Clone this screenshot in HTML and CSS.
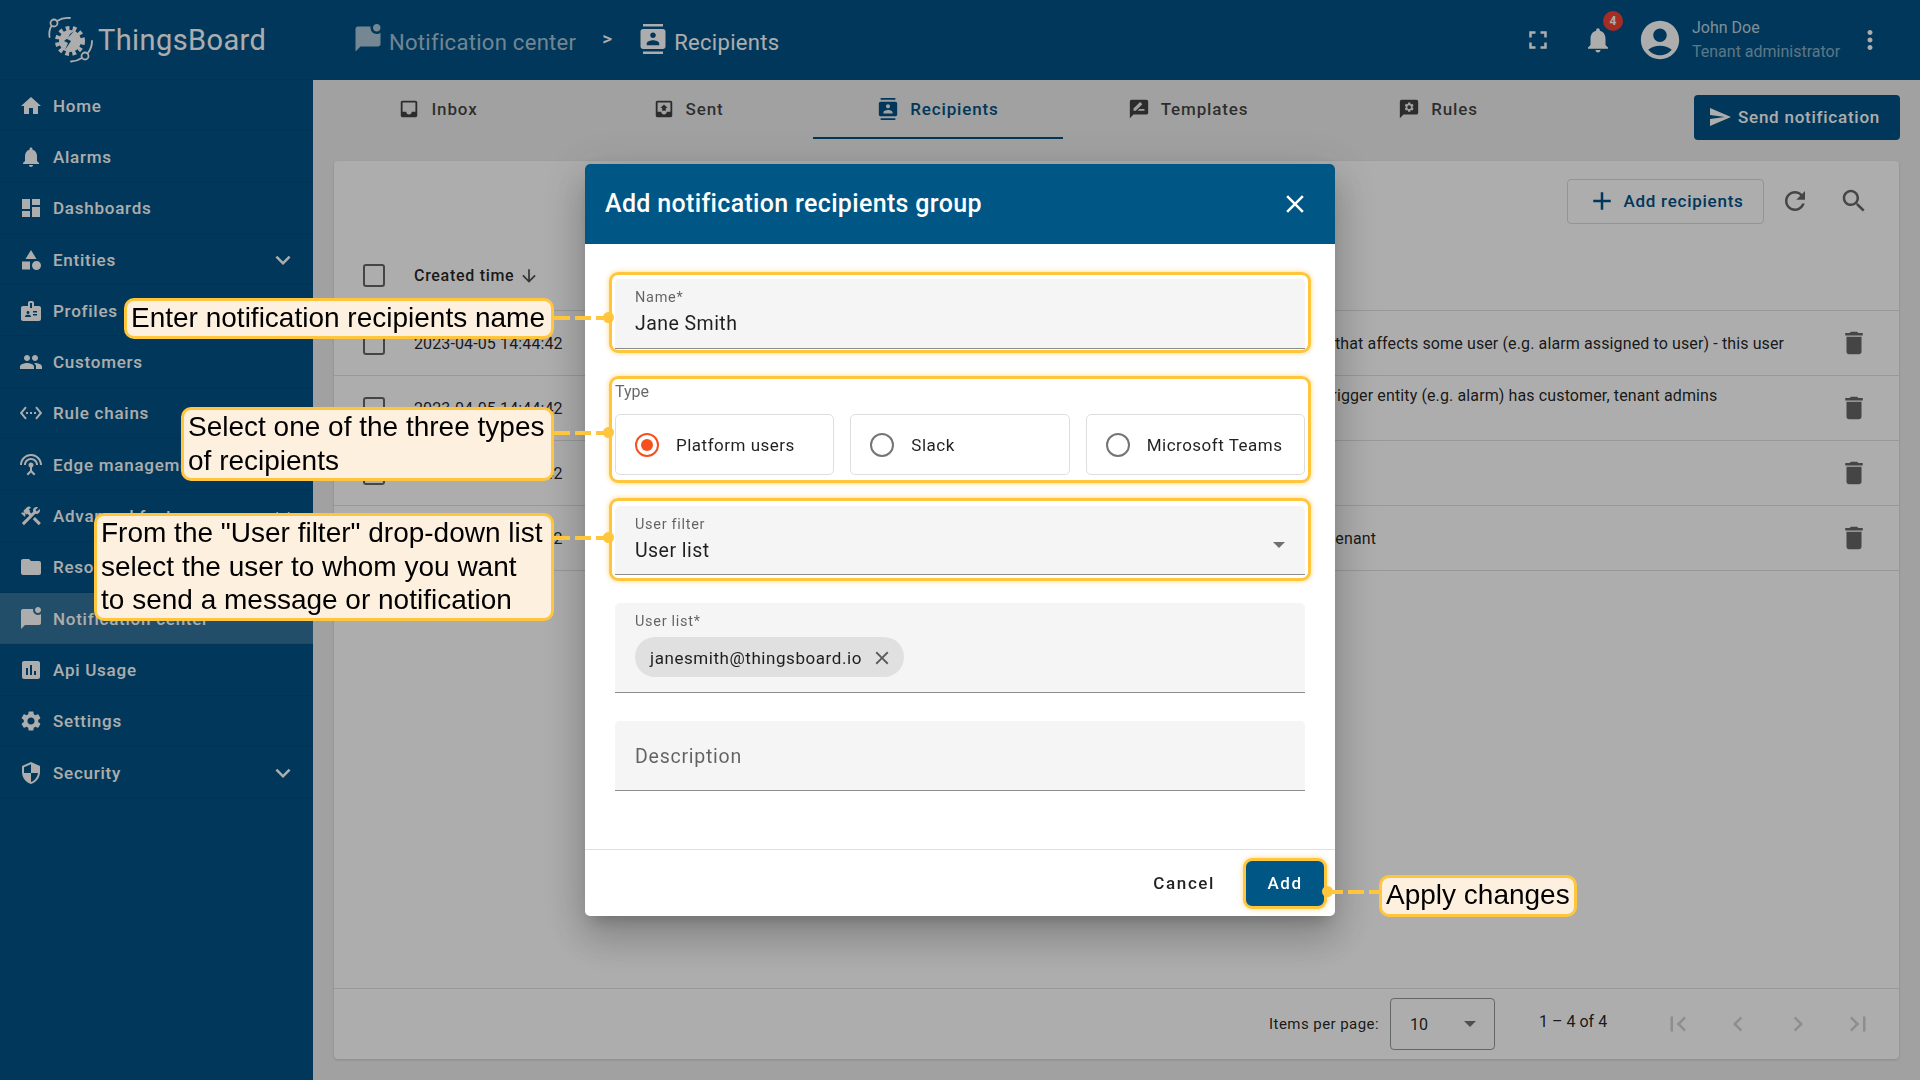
FILE: index.html
```html
<!DOCTYPE html>
<html>
<head>
    <meta charset="utf-8">
    <title>Notification center - Recipients</title>
    <link rel="stylesheet" href="styles.css">
</head>
<body>
<svg class="defs" width="0" height="0">
    <symbol id="i-home" viewBox="0 0 24 24"><path d="M10 20v-6h4v6h5v-8h3L12 3 2 12h3v8z"/></symbol>
    <symbol id="i-bell" viewBox="0 0 24 24"><path d="M12 22c1.1 0 2-.9 2-2h-4c0 1.1.89 2 2 2zm6-6v-5c0-3.07-1.64-5.64-4.5-6.32V4c0-.83-.67-1.5-1.5-1.5s-1.5.67-1.5 1.5v.68C7.63 5.36 6 7.92 6 11v5l-2 2v1h16v-1l-2-2z"/></symbol>
    <symbol id="i-dash" viewBox="0 0 24 24"><path d="M3 13h8V3H3v10zm0 8h8v-6H3v6zm10 0h8V11h-8v10zm0-18v6h8V3h-8z"/></symbol>
    <symbol id="i-entities" viewBox="0 0 24 24"><path d="M12 2l-5.5 9h11zM3 13.5h8v8H3zM17.5 13a4.5 4.5 0 1 0 0 9 4.5 4.5 0 0 0 0-9z"/></symbol>
    <symbol id="i-badge" viewBox="0 0 24 24"><path d="M20 7h-5V4c0-1.1-.9-2-2-2h-2c-1.1 0-2 .9-2 2v3H4c-1.1 0-2 .9-2 2v11c0 1.1.9 2 2 2h16c1.1 0 2-.9 2-2V9c0-1.1-.9-2-2-2zM9 12c.83 0 1.5.67 1.5 1.5S9.83 15 9 15s-1.5-.67-1.5-1.5S8.17 12 9 12zm3 6H6v-.43c0-.6.36-1.15.92-1.39.64-.28 1.34-.43 2.08-.43s1.44.15 2.08.43c.55.24.92.78.92 1.39V18zm1-9h-2V4h2v5zm5 7.5h-4V15h4v1.5zm0-3h-4V12h4v1.5z"/></symbol>
    <symbol id="i-people" viewBox="0 0 24 24"><path d="M16 11c1.66 0 2.99-1.34 2.99-3S17.66 5 16 5s-3 1.34-3 3 1.34 3 3 3zm-8 0c1.66 0 2.99-1.34 2.99-3S9.66 5 8 5 5 6.34 5 8s1.34 3 3 3zm0 2c-2.33 0-7 1.17-7 3.5V19h14v-2.5C15 14.17 10.33 13 8 13zm8 0c-.29 0-.62.02-.97.05 1.16.84 1.97 1.97 1.97 3.45V19h6v-2.5c0-2.33-4.67-3.5-7-3.5z"/></symbol>
    <symbol id="i-rules" viewBox="0 0 24 24"><path d="M7.77 6.76L6.23 5.48.82 12l5.41 6.52 1.54-1.28L3.42 12l4.35-5.24zM7 13h2v-2H7v2zm10-2h-2v2h2v-2zm-6 2h2v-2h-2v2zm6.77-7.52l-1.54 1.28L20.58 12l-4.35 5.24 1.54 1.28L23.18 12l-5.41-6.52z"/></symbol>
    <symbol id="i-edge" viewBox="0 0 24 24"><path d="M12 5c-3.87 0-7 3.13-7 7h2c0-2.76 2.24-5 5-5s5 2.24 5 5h2c0-3.87-3.13-7-7-7zm1 9.29c.88-.39 1.5-1.26 1.5-2.29 0-1.38-1.12-2.5-2.5-2.5S9.5 10.62 9.5 12c0 1.02.62 1.9 1.5 2.29v3.3L7.59 21 9 22.41l3-3 3 3L16.41 21 13 17.59v-3.3zM12 1C5.93 1 1 5.93 1 12h2c0-4.97 4.03-9 9-9s9 4.03 9 9h2c0-6.07-4.93-11-11-11z"/></symbol>
    <symbol id="i-tools" viewBox="0 0 24 24"><path d="M13.783 15.172l2.121-2.121 5.996 5.996-2.121 2.121zM17.5 10c1.93 0 3.5-1.57 3.5-3.5 0-.58-.16-1.12-.41-1.6l-2.7 2.7-1.49-1.49 2.7-2.7c-.48-.25-1.02-.41-1.6-.41C15.57 3 14 4.57 14 6.5c0 .41.08.8.21 1.16l-1.85 1.85-1.78-1.78.71-.71-1.41-1.41L12 3.49c-1.17-1.17-3.07-1.17-4.24 0L4.22 7.03l1.41 1.41H2.81l-.71.71 3.54 3.54.71-.71V9.15l1.41 1.41.71-.71 1.78 1.78-7.41 7.41 2.12 2.12L16.34 9.79c.36.13.75.21 1.16.21z"/></symbol>
    <symbol id="i-folder" viewBox="0 0 24 24"><path d="M10 4H4c-1.1 0-1.99.9-1.99 2L2 18c0 1.1.9 2 2 2h16c1.1 0 2-.9 2-2V8c0-1.1-.9-2-2-2h-8l-2-2z"/></symbol>
    <symbol id="i-notif" viewBox="0 0 24 24"><path d="M22 6.98V16c0 1.1-.9 2-2 2H6l-4 4V4c0-1.1.9-2 2-2h10.1c-.06.32-.1.66-.1 1 0 2.76 2.24 5 5 5 1.13 0 2.16-.39 3-1.02zM16 3c0 1.66 1.34 3 3 3s3-1.34 3-3-1.34-3-3-3-3 1.34-3 3z"/></symbol>
    <symbol id="i-chart" viewBox="0 0 24 24"><path d="M19 3H5c-1.1 0-2 .9-2 2v14c0 1.1.9 2 2 2h14c1.1 0 2-.9 2-2V5c0-1.1-.9-2-2-2zM9 17H7v-7h2v7zm4 0h-2V7h2v10zm4 0h-2v-4h2v4z"/></symbol>
    <symbol id="i-gear" viewBox="0 0 24 24"><path d="M19.14 12.94c.04-.3.06-.61.06-.94 0-.32-.02-.64-.07-.94l2.03-1.58c.18-.14.23-.41.12-.61l-1.92-3.32c-.12-.22-.37-.29-.59-.22l-2.39.96c-.5-.38-1.03-.7-1.62-.94l-.36-2.54c-.04-.24-.24-.41-.48-.41h-3.84c-.24 0-.43.17-.47.41l-.36 2.54c-.59.24-1.13.57-1.62.94l-2.39-.96c-.22-.08-.47 0-.59.22L2.74 8.87c-.12.21-.08.47.12.61l2.03 1.58c-.05.3-.09.63-.09.94s.02.64.07.94l-2.03 1.58c-.18.14-.23.41-.12.61l1.92 3.32c.12.22.37.29.59.22l2.39-.96c.5.38 1.03.7 1.62.94l.36 2.54c.05.24.24.41.48.41h3.84c.24 0 .44-.17.47-.41l.36-2.54c.59-.24 1.13-.56 1.62-.94l2.39.96c.22.08.47 0 .59-.22l1.92-3.32c.12-.22.07-.47-.12-.61l-2.01-1.58zM12 15.6c-1.98 0-3.6-1.62-3.6-3.6s1.62-3.6 3.6-3.6 3.6 1.62 3.6 3.6-1.62 3.6-3.6 3.6z"/></symbol>
    <symbol id="i-shield" viewBox="0 0 24 24"><path d="M12 1L3 5v6c0 5.55 3.84 10.74 9 12 5.16-1.26 9-6.45 9-12V5l-9-4zm0 10.99h7c-.53 4.12-3.28 7.79-7 8.94V12H5V6.3l7-3.11v8.8z"/></symbol>
    <symbol id="i-more" viewBox="0 0 24 24"><path d="M16.59 8.59L12 13.17 7.41 8.59 6 10l6 6 6-6z"/></symbol>
    <symbol id="i-contacts" viewBox="0 0 24 24"><path d="M20 0H4v2h16V0zM4 24h16v-2H4v2zM20 4H4c-1.1 0-2 .9-2 2v12c0 1.1.9 2 2 2h16c1.1 0 2-.9 2-2V6c0-1.1-.9-2-2-2zm-8 2.75c1.24 0 2.25 1.01 2.25 2.25s-1.01 2.25-2.25 2.25S9.75 10.24 9.75 9 10.76 6.75 12 6.75zM17 17H7v-1.5c0-1.67 3.33-2.5 5-2.5s5 .83 5 2.5V17z"/></symbol>
    <symbol id="i-inbox" viewBox="0 0 24 24"><path d="M19 3H5c-1.1 0-2 .9-2 2v14c0 1.1.9 2 2 2h14c1.1 0 2-.9 2-2V5c0-1.1-.9-2-2-2zm0 12h-4c0 1.66-1.35 3-3 3s-3-1.34-3-3H5V5h14v10z"/></symbol>
    <symbol id="i-outbox" viewBox="0 0 24 24"><path d="M19 3H5c-1.1 0-2 .9-2 2v14c0 1.1.9 2 2 2h14c1.1 0 2-.9 2-2V5c0-1.1-.9-2-2-2zm0 12h-4c0 1.66-1.35 3-3 3s-3-1.34-3-3H5V5h14v10zM8 11h2v3h4v-3h2l-4-4z"/></symbol>
    <symbol id="i-review" viewBox="0 0 24 24"><path d="M20 2H4c-1.1 0-1.99.9-1.99 2L2 22l4-4h14c1.1 0 2-.9 2-2V4c0-1.1-.9-2-2-2zM6 14v-2.47l6.88-6.88c.2-.2.51-.2.71 0l1.77 1.77c.2.2.2.51 0 .71L8.47 14H6zm12 0h-7.5l2-2H18v2z"/></symbol>
    <symbol id="i-chatgear" viewBox="0 0 24 24"><path fill-rule="evenodd" d="M20 2H4c-1.1 0-2 .9-2 2v18l4-4h14c1.1 0 2-.9 2-2V4c0-1.1-.9-2-2-2zM15.9 10.7l1.1.9-1.2 2.1-1.3-.5c-.3.2-.6.4-.9.5l-.2 1.3h-2.4l-.2-1.3c-.3-.1-.6-.3-.9-.5l-1.3.5L7.4 11.6l1.1-.9V9.3l-1.1-.9 1.2-2.1 1.3.5c.3-.2.6-.4.9-.5l.2-1.3h2.4l.2 1.3c.3.1.6.3.9.5l1.3-.5 1.2 2.1-1.1.9zM12.2 8a2 2 0 1 0 0 4 2 2 0 0 0 0-4z"/></symbol>
    <symbol id="i-send" viewBox="0 0 24 24"><path d="M2.01 21L23 12 2.01 3 2 10l15 2-15 2z"/></symbol>
    <symbol id="i-add" viewBox="0 0 24 24"><path d="M19 13h-6v6h-2v-6H5v-2h6V5h2v6h6v2z"/></symbol>
    <symbol id="i-refresh" viewBox="0 0 24 24"><path d="M17.65 6.35C16.2 4.9 14.21 4 12 4c-4.42 0-7.99 3.58-7.99 8s3.57 8 7.99 8c3.73 0 6.84-2.55 7.73-6h-2.08c-.82 2.33-3.04 4-5.65 4-3.31 0-6-2.69-6-6s2.69-6 6-6c1.66 0 3.14.69 4.22 1.78L13 11h7V4l-2.35 2.35z"/></symbol>
    <symbol id="i-search" viewBox="0 0 24 24"><path d="M15.5 14h-.79l-.28-.27C15.41 12.59 16 11.11 16 9.5 16 5.91 13.09 3 9.5 3S3 5.91 3 9.5 5.91 16 9.5 16c1.61 0 3.09-.59 4.23-1.57l.27.28v.79l5 4.99L20.49 19l-4.99-5zm-6 0C7.01 14 5 11.99 5 9.5S7.01 5 9.5 5 14 7.01 14 9.5 11.99 14 9.5 14z"/></symbol>
    <symbol id="i-trash" viewBox="0 0 24 24"><path d="M6 19c0 1.1.9 2 2 2h8c1.1 0 2-.9 2-2V7H6v12zM19 4h-3.5l-1-1h-5l-1 1H5v2h14V4z"/></symbol>
    <symbol id="i-down" viewBox="0 0 24 24"><path d="M20 12l-1.41-1.41L13 16.17V4h-2v12.17l-5.58-5.59L4 12l8 8 8-8z"/></symbol>
    <symbol id="i-full" viewBox="0 0 24 24"><path d="M7 14H5v5h5v-2H7v-3zm-2-4h2V7h3V5H5v5zm12 7h-3v2h5v-5h-2v3zM14 5v2h3v3h2V5h-5z"/></symbol>
    <symbol id="i-account" viewBox="0 0 24 24"><path d="M12 2C6.48 2 2 6.48 2 12s4.48 10 10 10 10-4.48 10-10S17.52 2 12 2zm0 4c1.93 0 3.5 1.57 3.5 3.5S13.93 13 12 13s-3.5-1.57-3.5-3.5S10.07 6 12 6zm0 14c-2.03 0-4.43-.82-6.14-2.88C7.55 15.8 9.68 15 12 15s4.45.8 6.14 2.12C16.43 19.18 14.03 20 12 20z"/></symbol>
    <symbol id="i-vert" viewBox="0 0 24 24"><path d="M12 8c1.1 0 2-.9 2-2s-.9-2-2-2-2 .9-2 2 .9 2 2 2zm0 2c-1.1 0-2 .9-2 2s.9 2 2 2 2-.9 2-2-.9-2-2-2zm0 6c-1.1 0-2 .9-2 2s.9 2 2 2 2-.9 2-2-.9-2-2-2z"/></symbol>
    <symbol id="i-close" viewBox="0 0 24 24"><path d="M19 6.41L17.59 5 12 10.59 6.41 5 5 6.41 10.59 12 5 17.59 6.41 19 12 13.41 17.59 19 19 17.59 13.41 12z"/></symbol>
    <symbol id="i-first" viewBox="0 0 24 24"><path d="M18.41 16.59L13.82 12l4.59-4.59L17 6l-6 6 6 6zM6 6h2v12H6z"/></symbol>
    <symbol id="i-prev" viewBox="0 0 24 24"><path d="M15.41 7.41L14 6l-6 6 6 6 1.41-1.41L10.83 12z"/></symbol>
    <symbol id="i-next" viewBox="0 0 24 24"><path d="M10 6L8.59 7.41 13.17 12l-4.58 4.59L10 18l6-6z"/></symbol>
    <symbol id="i-last" viewBox="0 0 24 24"><path d="M5.59 7.41L10.18 12l-4.59 4.59L7 18l6-6-6-6zM16 6h2v12h-2z"/></symbol>
</svg>

<div class="app">
    <aside class="side">
        <div class="logo">
            <svg class="logo-mark" viewBox="0 0 50 50">
                <circle class="logo-teeth" cx="24" cy="26" r="12.5"/>
                <circle class="logo-core" cx="24" cy="26" r="11"/>
                <path class="logo-bolt" d="M28 16l-7 8 4 2-6 9 3-7-4-2 4-3 2-4z"/>
                <circle class="logo-line" cx="8" cy="8" r="3.5"/>
                <circle class="logo-line" cx="39" cy="41" r="3.5"/>
                <path class="logo-line" d="M11 6C15 3.5 20 2.5 24 3M5.5 11C3.5 14 3 18 3.5 22M41.5 38.5C44.5 35 46 30 46 26M36 43C32 45.5 28 46.5 25 46.5"/>
            </svg>
            <span class="logo-text">ThingsBoard</span>
        </div>
        <nav>
            <a class="item"><svg class="ico"><use href="#i-home"/></svg>Home</a>
            <a class="item"><svg class="ico"><use href="#i-bell"/></svg>Alarms</a>
            <a class="item"><svg class="ico"><use href="#i-dash"/></svg>Dashboards</a>
            <a class="item"><svg class="ico"><use href="#i-entities"/></svg>Entities<svg class="chev"><use href="#i-more"/></svg></a>
            <a class="item"><svg class="ico"><use href="#i-badge"/></svg>Profiles</a>
            <a class="item"><svg class="ico"><use href="#i-people"/></svg>Customers</a>
            <a class="item"><svg class="ico"><use href="#i-rules"/></svg>Rule chains</a>
            <a class="item"><svg class="ico"><use href="#i-edge"/></svg>Edge management</a>
            <a class="item"><svg class="ico"><use href="#i-tools"/></svg>Advanced features<svg class="chev"><use href="#i-more"/></svg></a>
            <a class="item"><svg class="ico"><use href="#i-folder"/></svg>Resources</a>
            <a class="item active"><svg class="ico"><use href="#i-notif"/></svg>Notification center</a>
            <a class="item"><svg class="ico"><use href="#i-chart"/></svg>Api Usage</a>
            <a class="item"><svg class="ico"><use href="#i-gear"/></svg>Settings</a>
            <a class="item"><svg class="ico"><use href="#i-shield"/></svg>Security<svg class="chev"><use href="#i-more"/></svg></a>
        </nav>
    </aside>

    <div class="main">
        <header class="top">
            <div class="crumb dim"><svg class="crumb-ico"><use href="#i-notif"/></svg>Notification center</div>
            <span class="crumb-sep">&gt;</span>
            <div class="crumb"><svg class="crumb-ico"><use href="#i-contacts"/></svg>Recipients</div>
            <div class="top-right">
                <svg class="top-ico"><use href="#i-full"/></svg>
                <div class="bell"><svg class="top-ico"><use href="#i-bell"/></svg><span class="badge">4</span></div>
                <svg class="avatar"><use href="#i-account"/></svg>
                <div class="user">
                    <div class="user-name">John Doe</div>
                    <div class="user-role">Tenant administrator</div>
                </div>
                <svg class="top-ico"><use href="#i-vert"/></svg>
            </div>
        </header>

        <div class="tabbar">
            <div class="tab"><svg class="tab-ico"><use href="#i-inbox"/></svg>Inbox</div>
            <div class="tab"><svg class="tab-ico"><use href="#i-outbox"/></svg>Sent</div>
            <div class="tab on"><svg class="tab-ico"><use href="#i-contacts"/></svg>Recipients</div>
            <div class="tab"><svg class="tab-ico"><use href="#i-review"/></svg>Templates</div>
            <div class="tab"><svg class="tab-ico"><use href="#i-chatgear"/></svg>Rules</div>
            <button class="send"><svg class="send-ico"><use href="#i-send"/></svg>Send notification</button>
        </div>

        <div class="content">
            <section class="card">
                <div class="toolbar">
                    <button class="add-btn"><svg class="tool-ico"><use href="#i-add"/></svg>Add recipients</button>
                    <svg class="tool-ico gray"><use href="#i-refresh"/></svg>
                    <svg class="tool-ico gray"><use href="#i-search"/></svg>
                </div>
                <div class="row head">
                    <span class="check"></span>
                    <div class="sort">Created time<svg class="sort-ico"><use href="#i-down"/></svg></div>
                </div>
                <div class="row">
                    <span class="check"></span>
                    <div>2023-04-05 14:44:42</div>
                    <div class="desc">that affects some user (e.g. alarm assigned to user) - this user</div>
                    <svg class="trash"><use href="#i-trash"/></svg>
                </div>
                <div class="row">
                    <span class="check"></span>
                    <div>2023-04-05 14:44:42</div>
                    <div class="desc raised">trigger entity (e.g. alarm) has customer, tenant admins</div>
                    <svg class="trash"><use href="#i-trash"/></svg>
                </div>
                <div class="row">
                    <span class="check"></span>
                    <div>2023-04-05 14:44:42</div>
                    <div class="desc"></div>
                    <svg class="trash"><use href="#i-trash"/></svg>
                </div>
                <div class="row">
                    <span class="check"></span>
                    <div>2023-04-05 14:44:42</div>
                    <div class="desc shift">tenant</div>
                    <svg class="trash"><use href="#i-trash"/></svg>
                </div>
                <div class="pager">
                    <span class="pager-label">Items per page:</span>
                    <div class="pager-select">10<span class="caret"></span></div>
                    <span class="pager-range">1 – 4 of 4</span>
                    <svg class="pager-ico"><use href="#i-first"/></svg>
                    <svg class="pager-ico"><use href="#i-prev"/></svg>
                    <svg class="pager-ico"><use href="#i-next"/></svg>
                    <svg class="pager-ico"><use href="#i-last"/></svg>
                </div>
            </section>
        </div>
    </div>
</div>

<div class="backdrop">
    <div class="dialog">
        <div class="dialog-head">
            <h2>Add notification recipients group</h2>
            <svg class="dialog-close"><use href="#i-close"/></svg>
        </div>
        <div class="dialog-body">
            <div class="field">
                <label>Name*</label>
                <div class="value">Jane Smith</div>
            </div>
            <div class="type-label">Type</div>
            <div class="types">
                <div class="type"><span class="radio on"></span>Platform users</div>
                <div class="type"><span class="radio"></span>Slack</div>
                <div class="type"><span class="radio"></span>Microsoft Teams</div>
            </div>
            <div class="field filter">
                <label>User filter</label>
                <div class="value">User list</div>
                <span class="caret"></span>
            </div>
            <div class="field list">
                <label>User list*</label>
                <div class="chip">janesmith@thingsboard.io<svg class="chip-x"><use href="#i-close"/></svg></div>
            </div>
            <div class="field descr">Description</div>
        </div>
        <div class="dialog-foot">
            <button class="cancel">Cancel</button>
            <button class="confirm">Add</button>
        </div>
    </div>
</div>

<div class="marks">
    <div class="mark m-name"></div>
    <div class="mark m-type"></div>
    <div class="mark m-filter"></div>
    <div class="mark m-add"></div>

    <div class="link l-name"></div>
    <div class="link l-type"></div>
    <div class="link l-filter"></div>
    <div class="link l-add"></div>

    <div class="note n-name">Enter notification recipients name</div>
    <div class="note n-type">Select one of the three types<br>of recipients</div>
    <div class="note n-filter">From the "User filter" drop-down list<br>select the user to whom you want<br>to send a message or notification</div>
    <div class="note n-add">Apply changes</div>
</div>
</body>
</html>
```

FILE: styles.css
```css
*{
    box-sizing:border-box;
}
html,body{
    margin:0;
    height:100%;
    overflow:hidden;
}
body{
    font-family:Roboto,"Liberation Sans",sans-serif;
    color:#212121;
    background:#eee;
}
svg{
    fill:currentColor;
    flex:none;
}
.defs{
    position:absolute;
}
button{
    font-family:inherit;
    border:none;
    background:none;
    padding:0;
}

/* layout */
.app{
    display:flex;
    height:1080px;
}
.side{
    width:313px;
    flex:none;
    background:#005285;
    color:#fff;
}
.main{
    flex:1;
    display:flex;
    flex-direction:column;
    min-width:0;
}

/* sidebar */
.logo{
    height:80px;
    display:flex;
    align-items:center;
    padding-left:46px;
    border-bottom:1px solid rgba(0,0,0,.05);
}
.logo-mark{
    width:50px;
    height:50px;
    margin-right:2px;
}
.logo-teeth{
    fill:none;
    stroke:#fff;
    stroke-width:5;
    stroke-dasharray:3.6 3.2;
}
.logo-core{
    fill:#fff;
}
.logo-bolt{
    fill:#005285;
}
.logo-line{
    fill:none;
    stroke:#fff;
    stroke-width:1.8;
    stroke-linecap:round;
}
.logo-text{
    font-size:29px;
    letter-spacing:.4px;
}
.item{
    height:51.3px;
    display:flex;
    align-items:center;
    padding:1px 0 0 19px;
    font-size:17px;
    font-weight:500;
    letter-spacing:.75px;
    border-bottom:1px solid rgba(0,0,0,.06);
}
.item.active{
    background:rgba(255,255,255,.2);
}
.ico{
    width:24px;
    height:24px;
    margin-right:10px;
}
.chev{
    width:30px;
    height:30px;
    margin-left:auto;
    margin-right:15px;
}

/* top bar */
.top{
    height:80px;
    flex:none;
    background:#005285;
    color:#fff;
    display:flex;
    align-items:center;
    padding-left:40px;
}
.crumb{
    display:flex;
    align-items:center;
    font-size:22px;
    letter-spacing:.3px;
    padding-top:5px;
}
.crumb.dim{
    color:rgba(255,255,255,.68);
}
.crumb-ico{
    width:30px;
    height:30px;
    margin-right:6px;
    margin-top:-7px;
}
.crumb-sep{
    font-size:19px;
    font-weight:500;
    margin:-4px 26px 0 26px;
}
.top-right{
    margin-left:auto;
    display:flex;
    align-items:center;
    padding-right:35px;
}
.top-ico{
    width:30px;
    height:30px;
    display:block;
}
.bell{
    position:relative;
    margin-left:30px;
}
.badge{
    position:absolute;
    top:-14px;
    right:-10px;
    width:20px;
    height:20px;
    border-radius:50%;
    background:#f44336;
    font-size:12px;
    font-weight:700;
    line-height:20px;
    text-align:center;
}
.avatar{
    width:46px;
    height:46px;
    margin-left:24px;
}
.user{
    margin-left:9px;
    width:163px;
    font-size:16px;
    line-height:24px;
    color:rgba(255,255,255,.75);
}
.user-role{
    color:rgba(255,255,255,.55);
}

/* tabs */
.tabbar{
    height:60px;
    flex:none;
    display:flex;
    align-items:flex-start;
}
.tab{
    width:250px;
    height:59px;
    display:flex;
    align-items:center;
    justify-content:center;
    padding-bottom:2px;
    font-size:17px;
    font-weight:500;
    letter-spacing:.85px;
    color:rgba(0,0,0,.72);
}
.tab.on{
    color:#005285;
    border-bottom:2px solid #005285;
    padding-bottom:0;
}
.tab-ico{
    width:22px;
    height:22px;
    margin-right:11px;
}
.send{
    margin:15px 20px 0 auto;
    width:206px;
    height:45px;
    padding:0 6px 2px 0;
    border-radius:4px;
    background:#005285;
    color:#fff;
    font-size:17px;
    font-weight:500;
    letter-spacing:.75px;
    display:flex;
    align-items:center;
    justify-content:center;
}
.send-ico{
    width:24px;
    height:24px;
    margin-right:6px;
}

/* card + table */
.content{
    flex:1;
    padding:21px;
    min-height:0;
}
.card{
    height:100%;
    background:#fff;
    border-radius:4px;
    display:flex;
    flex-direction:column;
    box-shadow:0 1px 3px rgba(0,0,0,.15);
}
.toolbar{
    height:80px;
    display:flex;
    align-items:center;
    justify-content:flex-end;
    gap:29px;
    padding-right:30px;
}
.add-btn{
    width:197px;
    height:45px;
    border:1px solid rgba(0,0,0,.14);
    border-radius:4px;
    color:#005285;
    font-size:17px;
    font-weight:500;
    letter-spacing:.75px;
    display:flex;
    align-items:center;
    justify-content:center;
    margin-right:-13px;
}
.tool-ico{
    width:30px;
    height:30px;
    margin-right:6px;
}
.toolbar .tool-ico.gray{
    color:rgba(0,0,0,.6);
    margin-right:0;
}
.row{
    height:65px;
    flex:none;
    display:grid;
    grid-template-columns:80px 921px 474px 1fr;
    align-items:center;
    font-size:16px;
    letter-spacing:.12px;
    color:rgba(0,0,0,.87);
    border-bottom:1px solid rgba(0,0,0,.12);
}
.row.head{
    height:70px;
    font-weight:500;
    letter-spacing:.7px;
}
.check{
    width:22px;
    height:23px;
    margin-left:29px;
    border:2px solid rgba(0,0,0,.6);
    border-radius:3px;
}
.sort{
    display:flex;
    align-items:center;
}
.sort-ico{
    width:20px;
    height:20px;
    margin-left:5px;
    color:rgba(0,0,0,.7);
}
.desc.raised{
    margin-left:-9px;
    margin-top:-25px;
}
.desc.shift{
    margin-left:-5px;
}
.trash{
    width:30px;
    height:30px;
    justify-self:center;
    color:rgba(0,0,0,.6);
}
.pager{
    margin-top:auto;
    height:71px;
    flex:none;
    border-top:1px solid rgba(0,0,0,.12);
    display:flex;
    align-items:center;
    font-size:15px;
    letter-spacing:.45px;
    color:rgba(0,0,0,.87);
    padding-left:935px;
}
.pager-label{
    margin-right:11px;
    flex:none;
    white-space:nowrap;
}
.pager-select{
    flex:none;
    width:105px;
    height:52px;
    border:1px solid rgba(0,0,0,.4);
    border-radius:4px;
    display:flex;
    align-items:center;
    padding-left:19px;
    font-size:16px;
    letter-spacing:0;
    position:relative;
    margin-right:44px;
}
.pager-select .caret{
    top:22px;
    right:18px;
}
.pager-range{
    flex:none;
    width:70px;
    margin-right:54px;
    margin-top:-5px;
    white-space:nowrap;
    font-size:16px;
    letter-spacing:0;
}
.pager-ico{
    width:30px;
    height:30px;
    margin-right:30px;
    color:rgba(0,0,0,.18);
}
.pager-ico:last-child{
    margin-right:0;
}
.caret{
    position:absolute;
    width:0;
    height:0;
    border-left:6px solid transparent;
    border-right:6px solid transparent;
    border-top:6px solid rgba(0,0,0,.54);
}

/* dialog */
.backdrop{
    position:fixed;
    top:0;
    left:0;
    right:0;
    bottom:0;
    background:rgba(0,0,0,.32);
    display:flex;
    align-items:center;
    justify-content:center;
}
.dialog{
    width:750px;
    height:752px;
    background:#fff;
    border-radius:5px;
    overflow:hidden;
    display:flex;
    flex-direction:column;
    box-shadow:0 11px 15px -7px rgba(0,0,0,.2),0 24px 38px 3px rgba(0,0,0,.14),0 9px 46px 8px rgba(0,0,0,.12);
}
.dialog-head{
    height:80px;
    flex:none;
    background:#005685;
    color:#fff;
    display:flex;
    align-items:center;
    justify-content:space-between;
    padding:0 25px 2px 20px;
}
.dialog-head h2{
    margin:0;
    font-size:25px;
    font-weight:500;
    letter-spacing:.33px;
}
.dialog-close{
    width:30px;
    height:30px;
    margin-top:2px;
}
.dialog-body{
    flex:1;
    padding:35px 30px 0;
}
.field{
    position:relative;
    height:70px;
    background:#f5f5f5;
    border-radius:5px 5px 0 0;
    border-bottom:1px solid #8c8c8c;
    padding:10px 20px 0;
}
.field label{
    display:block;
    font-size:14.5px;
    letter-spacing:.7px;
    color:rgba(0,0,0,.6);
    line-height:18px;
}
.value{
    font-size:19.5px;
    letter-spacing:.45px;
    line-height:26px;
    margin-top:4px;
    color:rgba(0,0,0,.87);
}
.type-label{
    margin-top:34px;
    height:31px;
    font-size:16px;
    line-height:18px;
    color:rgba(0,0,0,.6);
}
.types{
    display:flex;
    gap:16px;
}
.type{
    flex:1;
    height:61px;
    border:1px solid #dedede;
    border-radius:5px;
    display:flex;
    align-items:center;
    padding-left:19px;
    font-size:17px;
    letter-spacing:.5px;
    color:rgba(0,0,0,.87);
}
.radio{
    width:24px;
    height:24px;
    border:2px solid #757575;
    border-radius:50%;
    margin-right:17px;
    flex:none;
    position:relative;
}
.radio.on{
    border-color:#f4511e;
}
.radio.on:after{
    content:"";
    position:absolute;
    top:4px;
    left:4px;
    width:12px;
    height:12px;
    border-radius:50%;
    background:#f4511e;
}
.field.filter{
    margin-top:31px;
    height:69px;
}
.field.filter .caret{
    top:36px;
    right:20px;
}
.field.list{
    margin-top:28px;
    height:90px;
}
.chip{
    margin-top:6px;
    width:269px;
    height:40px;
    border-radius:20px;
    background:#e0e0e0;
    display:flex;
    align-items:center;
    padding:1px 0 0 15px;
    font-size:17px;
    letter-spacing:.56px;
    color:rgba(0,0,0,.87);
}
.chip-x{
    width:22px;
    height:22px;
    margin-left:auto;
    margin-right:11px;
    color:rgba(0,0,0,.6);
}
.field.descr{
    margin-top:28px;
    font-size:19.5px;
    letter-spacing:.75px;
    color:rgba(0,0,0,.6);
    padding-top:24px;
}
.dialog-foot{
    height:67px;
    flex:none;
    border-top:1px solid #e0e0e0;
    display:flex;
    align-items:center;
    justify-content:flex-end;
    padding-right:10px;
}
.cancel{
    font-size:17px;
    font-weight:500;
    letter-spacing:1.6px;
    color:rgba(0,0,0,.87);
    margin-right:30px;
}
.confirm{
    width:80px;
    height:45px;
    border-radius:5px;
    background:#005685;
    color:#fff;
    font-size:17px;
    font-weight:500;
    letter-spacing:1.6px;
}

/* annotations */
.marks{
    position:fixed;
    top:0;
    left:0;
    right:0;
    bottom:0;
}
.mark{
    position:absolute;
    border:3px solid #ffc53d;
    border-radius:9px;
    box-shadow:0 0 5px rgba(255,197,61,.7);
}
.m-name{
    left:609px;
    top:272px;
    width:702px;
    height:81px;
}
.m-type{
    left:609px;
    top:376px;
    width:702px;
    height:107px;
}
.m-filter{
    left:609px;
    top:498px;
    width:702px;
    height:83px;
}
.m-add{
    left:1243px;
    top:858px;
    width:84px;
    height:51px;
}
.note{
    position:absolute;
    background:#fef0df;
    border:3px solid #ffc53d;
    border-radius:10px;
    font-family:"Liberation Sans",Arial,sans-serif;
    font-size:28px;
    line-height:33.6px;
    color:#000;
    padding:0 0 0 4px;
    white-space:nowrap;
}
.n-name{
    left:124px;
    top:298px;
    width:430px;
    height:41px;
}
.n-type{
    left:181px;
    top:407px;
    width:373px;
    height:74px;
}
.n-filter{
    left:94px;
    top:513px;
    width:460px;
    height:108px;
}
.n-add{
    left:1379px;
    top:875px;
    width:198px;
    height:42px;
}
.link{
    position:absolute;
    height:4px;
    background:repeating-linear-gradient(to right,#ffc53d 0,#ffc53d 16px,transparent 16px,transparent 21px);
}
.link:after{
    content:"";
    position:absolute;
    top:-4px;
    width:11px;
    height:11px;
    border-radius:50%;
    background:#ffc53d;
}
.l-name{
    left:554px;
    top:316px;
    width:55px;
}
.l-type{
    left:554px;
    top:431px;
    width:55px;
}
.l-filter{
    left:554px;
    top:536px;
    width:55px;
}
.l-name:after,.l-type:after,.l-filter:after{
    right:-5px;
}
.l-add{
    left:1327px;
    top:890px;
    width:52px;
}
.l-add:after{
    left:-5px;
}
```
